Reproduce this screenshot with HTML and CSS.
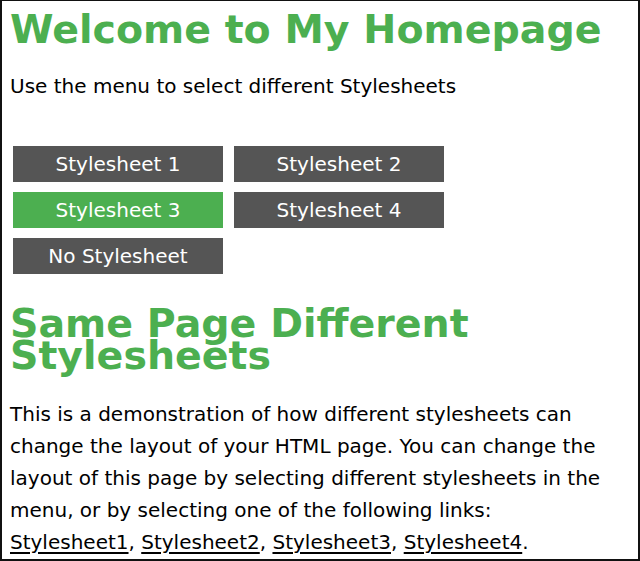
FILE: index.html
```html
<!DOCTYPE html>
<html lang="en">
<head>
<meta charset="utf-8">
<title>Welcome to My Homepage</title>
<link rel="stylesheet" href="styles.css">
</head>
<body>
<h1 class="title">Welcome to My Homepage</h1>
<p class="intro">Use the menu to select different Stylesheets</p>
<nav class="menu">
  <a class="btn" href="#">Stylesheet 1</a>
  <a class="btn" href="#">Stylesheet 2</a>
  <a class="btn active" href="#">Stylesheet 3</a>
  <a class="btn" href="#">Stylesheet 4</a>
  <a class="btn" href="#">No Stylesheet</a>
</nav>
<h2 class="subtitle">Same Page Different Stylesheets</h2>
<p class="text">This is a demonstration of how different stylesheets can change the layout of your HTML page. You can change the layout of this page by selecting different stylesheets in the menu, or by selecting one of the following links: <a class="link" href="#">Stylesheet1</a>, <a class="link" href="#">Stylesheet2</a>, <a class="link" href="#">Stylesheet3</a>, <a class="link" href="#">Stylesheet4</a>.</p>
</body>
</html>
```
FILE: styles.css
```css
html {
  background: #fff;
}
body {
  margin: 0;
  box-sizing: border-box;
  height: 561px;
  overflow: hidden;
  border-style: solid;
  border-color: #111;
  border-width: 1px 2px 2px 2px;
  padding: 0 20px 0 8px;
  font-family: Verdana, "DejaVu Sans", sans-serif;
  font-size: 20px;
  color: #000;
}
.title {
  margin: 5px 0 0;
  font-size: 39.5px;
  font-weight: bold;
  line-height: 46px;
  color: #4caf50;
}
.intro {
  margin: 18px 0 0;
  line-height: 32px;
}
.menu {
  margin: 44px 0 0;
  padding-left: 3px;
  display: grid;
  grid-template-columns: 210px 210px;
  column-gap: 11px;
  row-gap: 10px;
}
.btn {
  display: flex;
  align-items: center;
  justify-content: center;
  height: 36px;
  background: #555;
  color: #fff;
  text-decoration: none;
  font-size: 20px;
}
.btn.active {
  background: #4caf50;
}
.subtitle {
  margin: 33px 0 0;
  font-size: 39.5px;
  font-weight: bold;
  line-height: 32px;
  color: #4caf50;
}
.text {
  margin: 27px 0 0;
  line-height: 32px;
}
.link {
  color: #000;
  text-decoration: underline;
  text-underline-offset: 3px;
}
```
